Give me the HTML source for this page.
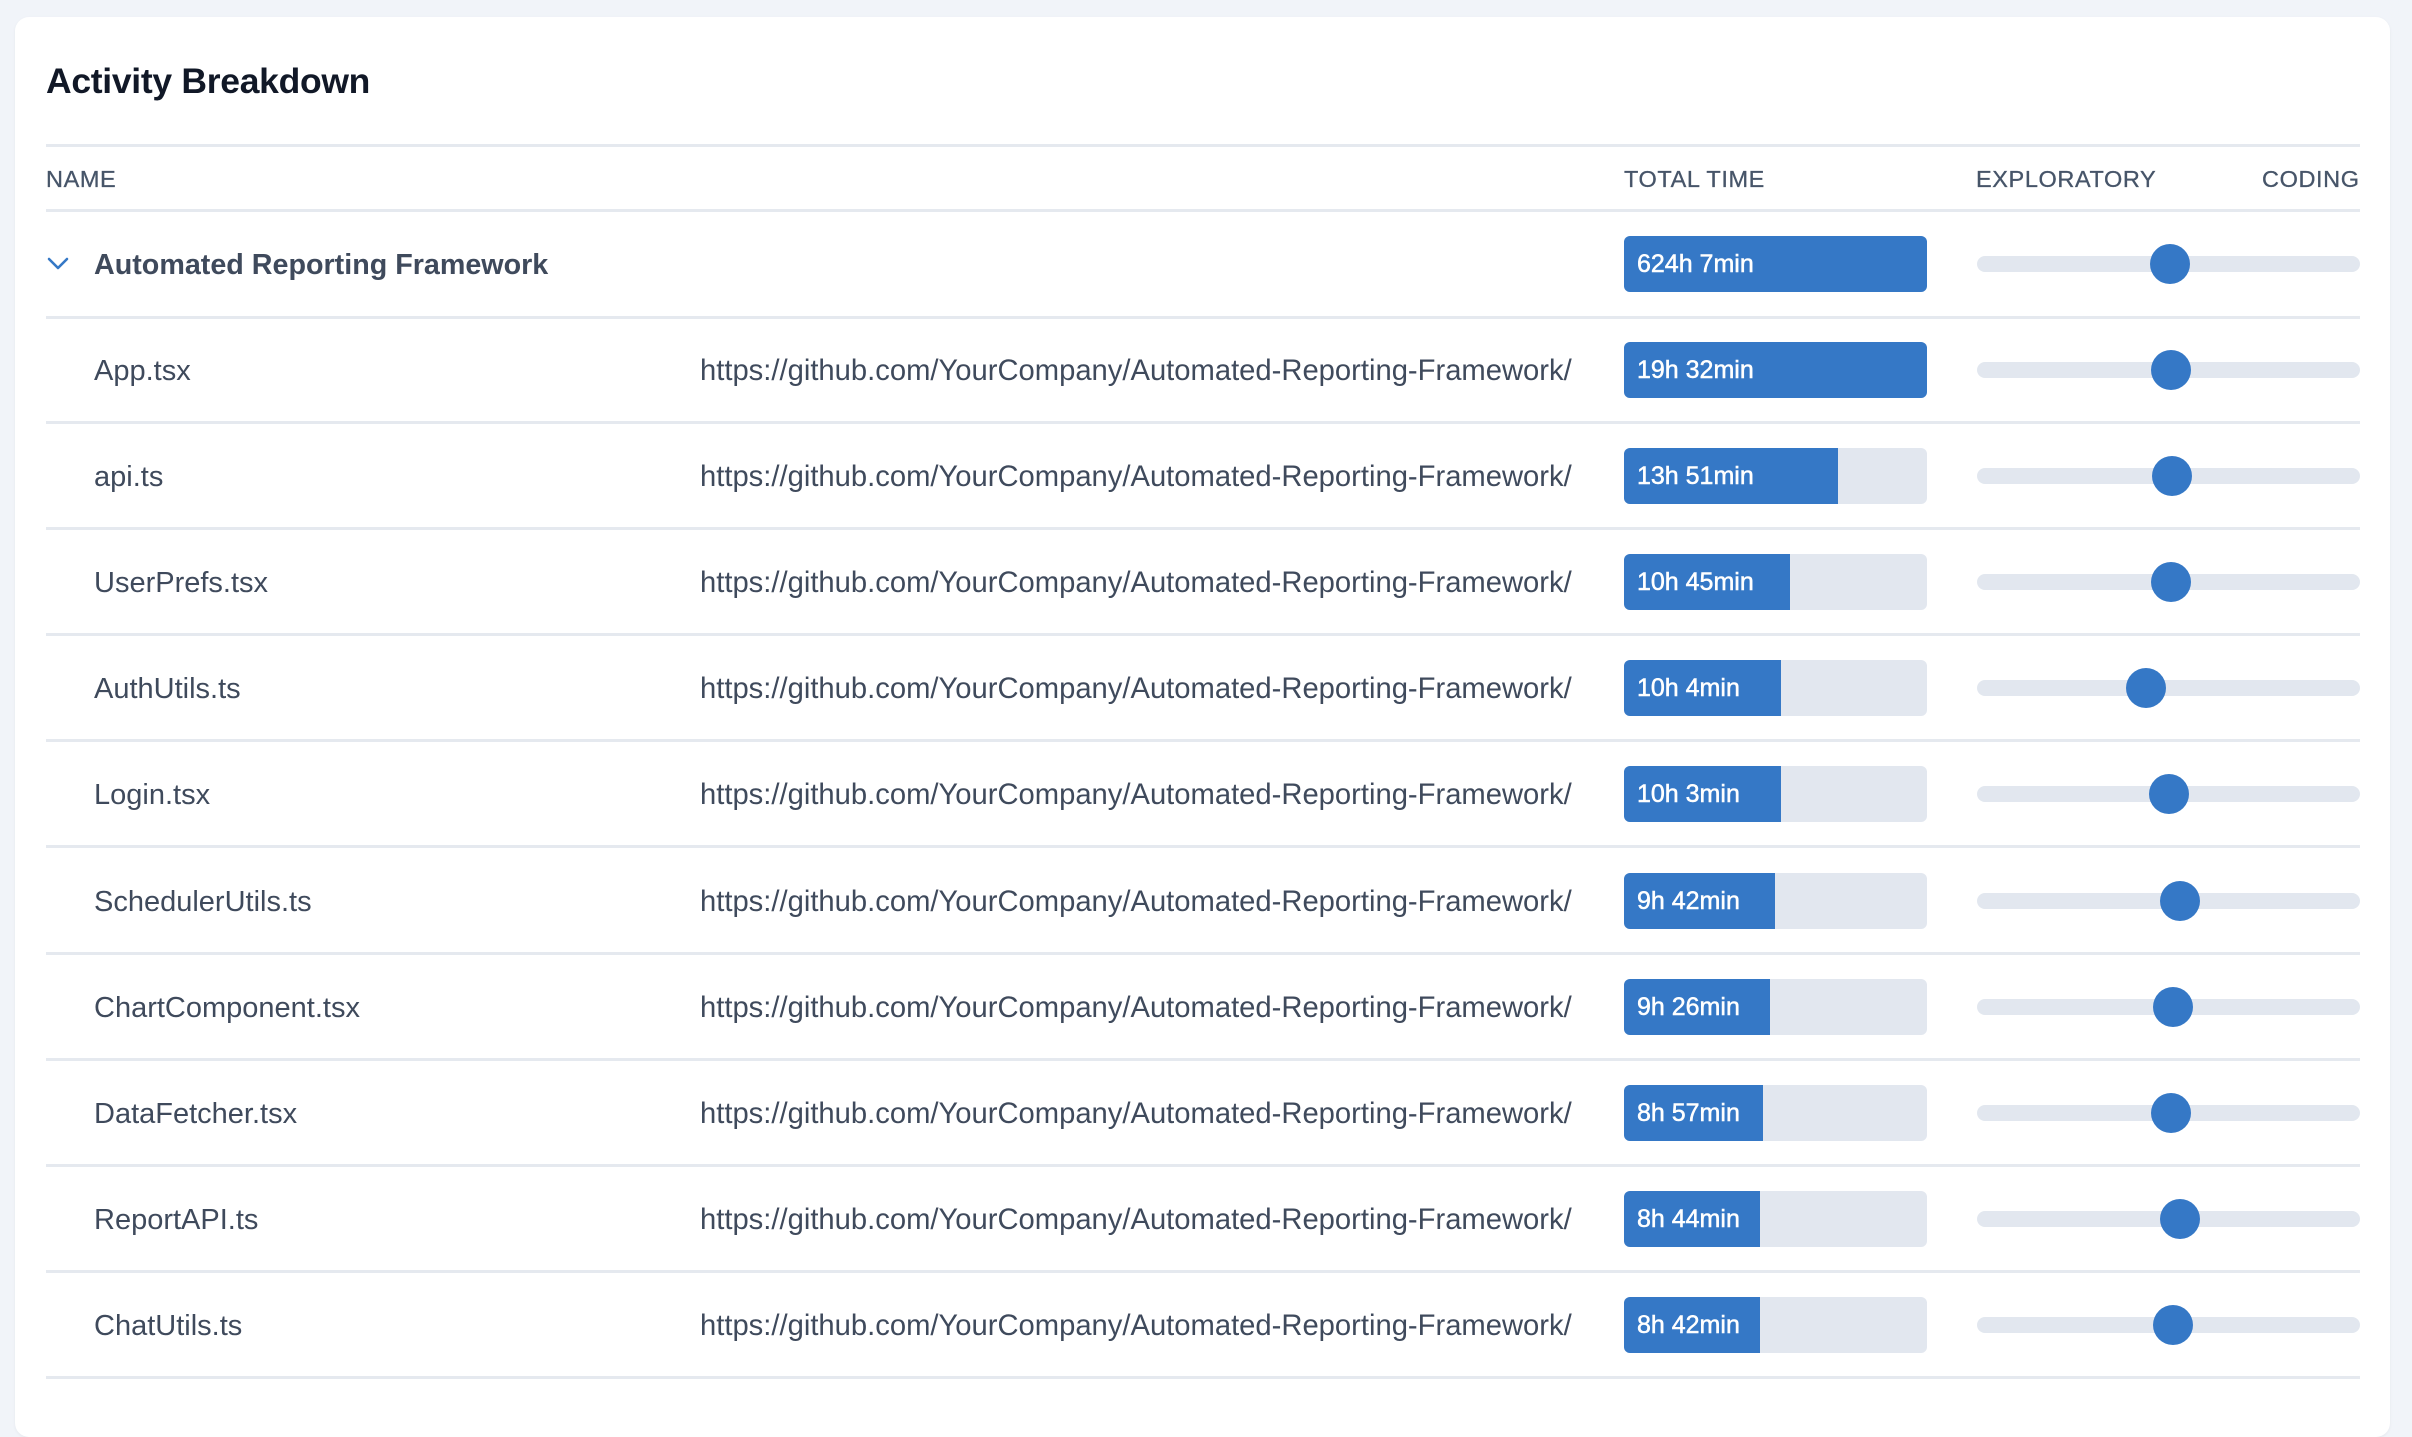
<!DOCTYPE html>
<html><head><meta charset="utf-8"><style>
*{margin:0;padding:0;box-sizing:border-box}
body{width:2412px;height:1394px;background:#f1f4f9;font-family:"Liberation Sans",sans-serif;overflow:hidden;position:relative}
.card{position:absolute;left:15px;top:17px;width:2375px;height:1420px;background:#fff;border-radius:14px;box-shadow:0 1px 3px rgba(0,0,0,.05)}
.t{position:absolute;white-space:nowrap}
.line{position:absolute;left:46px;width:2314px;height:3px;background:#e5e9ef}
.title{left:46px;top:61px;font-size:35.5px;font-weight:600;color:#111827;letter-spacing:-0.3px}
.hd{top:166px;font-size:23.5px;color:#475569;letter-spacing:0.6px;-webkit-text-stroke:0.3px #475569}
.nm{left:94px;font-size:29px;color:#3f4a5c;line-height:40px}
.url{left:700px;font-size:29.2px;color:#3f4a5c;line-height:40px}
.bar{position:absolute;left:1624px;width:303px;height:56px;background:#e2e7ef;border-radius:6px;overflow:hidden}
.fill{position:absolute;left:0;top:0;bottom:0;background:#3578c6}
.bar span{position:absolute;left:13px;top:0;line-height:56px;font-size:25px;color:#fff;white-space:nowrap;-webkit-text-stroke:0.5px #fff}
.trk{position:absolute;left:1977px;width:383px;height:16px;background:#e2e7ef;border-radius:8px}
.th{position:absolute;width:40px;height:40px;border-radius:50%;background:#3578c6}
</style></head><body>
<div class="card"></div>
<div class="t title">Activity Breakdown</div>
<div class="line" style="top:144px"></div>
<div class="t hd" style="left:46px">NAME</div>
<div class="t hd" style="left:1624px">TOTAL TIME</div>
<div class="t hd" style="left:1976px">EXPLORATORY</div>
<div class="t hd" style="left:2262px">CODING</div>
<div class="line" style="top:209px"></div>

<svg style="position:absolute;left:46px;top:255px" width="24" height="18" viewBox="0 0 24 18"><path d="M3 4 L12 13 L21 4" fill="none" stroke="#3578c6" stroke-width="2.6" stroke-linecap="round" stroke-linejoin="round"/></svg>
<div class="t nm" style="top:245px;font-weight:700;font-size:28.7px">Automated Reporting Framework</div>
<div class="bar" style="top:236px"><div class="fill" style="width:303px"></div><span>624h 7min</span></div>
<div class="trk" style="top:256px"></div><div class="th" style="left:2150px;top:244px"></div>
<div class="line" style="top:316px"></div>

<div id="rows"></div>
<script>
var d=[["App.tsx","19h 32min",1927,2171],["api.ts","13h 51min",1838,2172],["UserPrefs.tsx","10h 45min",1790,2171],["AuthUtils.ts","10h 4min",1781,2146],["Login.tsx","10h 3min",1781,2169],["SchedulerUtils.ts","9h 42min",1775,2180],["ChartComponent.tsx","9h 26min",1770,2173],["DataFetcher.tsx","8h 57min",1763,2171],["ReportAPI.ts","8h 44min",1760,2180],["ChatUtils.ts","8h 42min",1760,2173]];
var h="";
for(var i=0;i<d.length;i++){var c=370+i*106.1;
h+='<div class="t nm" style="top:'+(c-19)+'px">'+d[i][0]+'</div>';
h+='<div class="t url" style="top:'+(c-19)+'px">https://github.com/YourCompany/Automated-Reporting-Framework/</div>';
h+='<div class="bar" style="top:'+(c-28)+'px"><div class="fill" style="width:'+(d[i][2]-1624)+'px"></div><span>'+d[i][1]+'</span></div>';
h+='<div class="trk" style="top:'+(c-8)+'px"></div><div class="th" style="left:'+(d[i][3]-20)+'px;top:'+(c-20)+'px"></div>';
h+='<div class="line" style="top:'+(c+51)+'px"></div>';}
document.getElementById("rows").outerHTML=h;
</script>
</body></html>
